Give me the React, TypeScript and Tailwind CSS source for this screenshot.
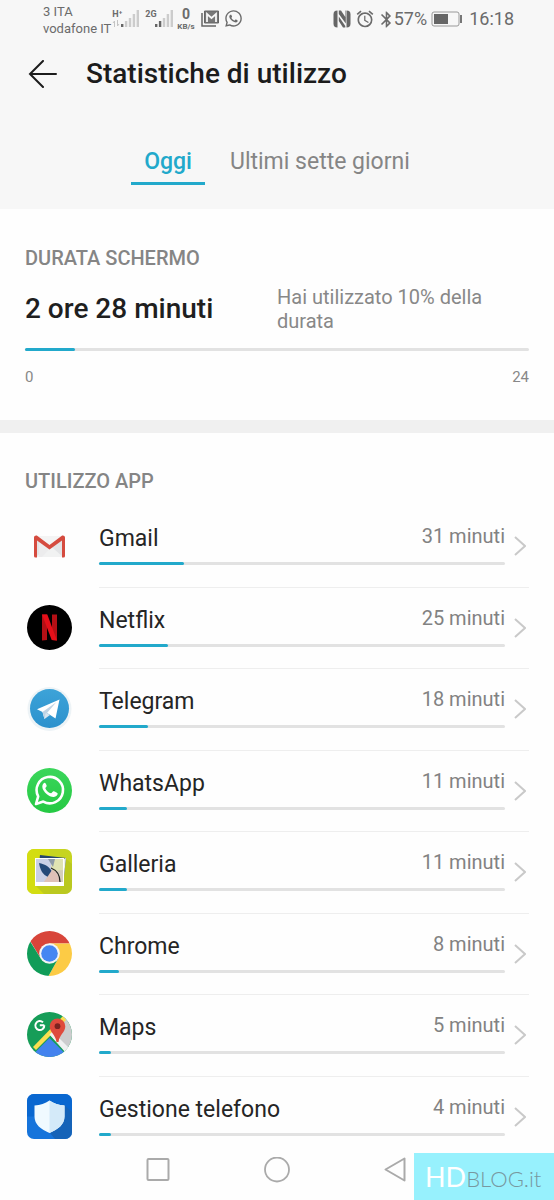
import { FaWhatsapp } from "react-icons/fa";
import { MdAlarm, MdBluetooth } from "react-icons/md";

const GmailIcon = () => (
  <svg viewBox="0 0 45 45" className="w-[45px] h-[45px]">
    <path d="M9 13h27v21H9z" fill="#e3e4e6" />
    <path d="M9 34l13.500-12L36 34z" fill="#f1f2f2" />
    <path d="M9 13h27L22.500 24z" fill="#f4f4f4" />
    <path d="M22.500 26L12 17v17h3l7.500-8z" fill="#ececed" />
    <path
      d="M7 14.500C7 12.700 9.200 12 10.500 13L22.500 22 34.500 13c1.300-1 3.500-.3 3.500 1.500V33q0 1.500-1.500 1.500H35V17.500L22.500 26.500 10 17.500v17H8.500Q7 34.500 7 33z"
      fill="#d54b3f"
    />
  </svg>
);

const NetflixIcon = () => (
  <svg viewBox="0 0 45 45" className="w-[45px] h-[45px]">
    <circle cx="22.500" cy="22.500" r="22.500" fill="#000" />
    <path d="M15 9.500h5V35l-5 .6zM25 9.500h5v26.100l-5-.6z" fill="#b50f15" />
    <path d="M15 9.500h5.300L30 35.600l-5.300-.6z" fill="#e50f19" />
  </svg>
);

const TelegramIcon = () => (
  <svg viewBox="0 0 45 45" className="w-[45px] h-[45px]">
    <defs>
      <linearGradient id="tg" x1="0" y1="0" x2="0" y2="1">
        <stop offset="0" stopColor="#3da3d8" />
        <stop offset="1" stopColor="#2b91cd" />
      </linearGradient>
    </defs>
    <circle cx="22.500" cy="23" r="22" fill="#edf3f6" />
    <circle cx="22.500" cy="22.500" r="19.500" fill="url(#tg)" />
    <path d="M10 23.300L32.500 13.500 28.500 32.500 20.500 27.300 17.500 33 15.500 26z" fill="#fff" />
    <path d="M15.500 26l14-10-9.500 11-2.500 6z" fill="#bfd3e4" />
    <path d="M17.500 33l1-5.500 2 0 2.500 1.500z" fill="#d9e5ef" />
  </svg>
);

const WhatsAppIcon = () => (
  <svg viewBox="0 0 45 45" className="w-[45px] h-[45px]">
    <defs>
      <linearGradient id="wa" x1="0" y1="0" x2="0" y2="1">
        <stop offset="0" stopColor="#3bd65b" />
        <stop offset="1" stopColor="#25c943" />
      </linearGradient>
    </defs>
    <circle cx="22.500" cy="22.500" r="22.500" fill="url(#wa)" />
    <path
      d="M9 36l2.200-7.600A13.200 13.200 0 1 1 16.300 33.600z"
      fill="none"
      stroke="#fff"
      strokeWidth="2.600"
      strokeLinejoin="round"
    />
    <path
      d="M17.800 14.800c-.8 0-2.500 1.400-2.500 3.900 0 2.600 2.100 5.300 4.300 7.200 2.300 2 4.700 3.100 7.200 3 2.300-.1 3.900-1.700 3.900-3.400 0-.6-3.700-2.500-4.400-2.300-.7.200-1.600 2.200-2.300 2.100-2.400-.6-4.800-3-5.600-4.900-.2-.7 1.300-1.500 1.300-2.300 0-.7-1-3.300-1.900-3.300z"
      fill="#fff"
    />
  </svg>
);

const GalleryIcon = () => (
  <svg viewBox="0 0 45 45" className="w-[45px] h-[45px]">
    <rect width="45" height="45" rx="7" fill="#c6d420" />
    <path d="M7 0h15.500v45H7a7 7 0 0 1-7-7V7a7 7 0 0 1 7-7z" fill="#d3dd12" />
    <path d="M37 8l8 7v23a7 7 0 0 1-7 7H17L9 37z" fill="#b2bf22" opacity=".6" />
    <path d="M13 6l26 3-3 27-26-3z" fill="#27466d" />
    <path d="M36 10l3-1-3 27z" fill="#eef0e8" />
    <rect x="8" y="9" width="29" height="28" fill="#fff" />
    <path d="M9 10h27v23H9z" fill="#c9cfe6" />
    <path d="M23 10h13v23H17l8-12z" fill="#d4cdbd" />
    <path d="M25 10h11v11l-10 1-2-5z" fill="#dfe3b2" />
    <path d="M12 14c6 1 11 4 13 9l-4 5C16 26 13 21 12 14z" fill="#244878" />
    <path d="M21 10l5 8 2-8z" fill="#8d9aa8" />
    <path d="M17 33l8-12c5 2 7 6 7 12z" fill="#dfc1b8" />
    <path d="M24 19c5 2 9 7 9 14" fill="none" stroke="#222" strokeWidth="1.200" />
  </svg>
);

const ChromeIcon = () => (
  <svg viewBox="0 0 45 45" className="w-[45px] h-[45px]">
    <defs>
      <clipPath id="chr">
        <circle cx="22.500" cy="22.500" r="22.500" />
      </clipPath>
    </defs>
    <g clipPath="url(#chr)">
      <path d="M0 0h45v12.500H22.500L13.800 27.500 3.500 10.500z" fill="#d8453a" />
      <path d="M45 12.500H22.500L31.200 27.500 21.500 45H45z" fill="#fccb45" />
      <path d="M0 8l3.500 3L13.800 27.500h17.400L21.500 45H0z" fill="#109c58" />
    </g>
    <circle cx="22.500" cy="22.500" r="10.300" fill="#f3f4f4" />
    <circle cx="22.500" cy="22.500" r="8.300" fill="#4586f2" />
  </svg>
);

const MapsIcon = () => (
  <svg viewBox="0 0 45 45" className="w-[45px] h-[45px]">
    <defs>
      <clipPath id="map">
        <circle cx="22.500" cy="22.500" r="22.500" />
      </clipPath>
    </defs>
    <g clipPath="url(#map)">
      <path d="M0 0h45v45H0z" fill="#169d58" />
      <path d="M38 4L22.500 22.500 40 41l5-5V0z" fill="#cccdce" />
      <path d="M36 4l3 4-30 30-3-3z" fill="#fbdf4f" />
      <path d="M22.500 22.500l3-3L43 37l-4 4z" fill="#f0f1f1" />
      <path d="M22.500 26L5 43.500V45h35v-1.500z" fill="#4382ee" />
    </g>
    <path
      d="M17.300 13.300h-4.500M16 10.400a4.500 4.500 0 1 0 1.300 2.900"
      fill="none"
      stroke="#fff"
      strokeWidth="2"
    />
    <path d="M30.500 6.500a7.800 7.800 0 0 1 7.800 7.800c0 6-5.800 8.200-6.800 15.700h-2c-1-7.500-6.800-9.700-6.800-15.700a7.800 7.800 0 0 1 7.800-7.800z" fill="#df4a3d" />
    <circle cx="30.500" cy="14.200" r="2.900" fill="#7c2320" />
  </svg>
);

const PhoneManagerIcon = () => (
  <svg viewBox="0 0 45 45" className="w-[45px] h-[45px]">
    <rect width="45" height="45" rx="7" fill="#1674db" />
    <path d="M7 0h31a7 7 0 0 1 7 7v15.500H0V7a7 7 0 0 1 7-7z" fill="#0967d0" />
    <path d="M36 10l9 8v20a7 7 0 0 1-7 7H28l-5-6z" fill="#1563b8" />
    <path d="M22.500 6.500c4.500 3.200 9 4.500 15 5v11c0 8-6.500 13-15 16.500-8.500-3.500-15-8.500-15-16.500v-11c6-.5 10.500-1.800 15-5z" fill="#f0faff" />
    <path d="M22.500 6.500c4.500 3.200 9 4.500 15 5v11c0 8-6.500 13-15 16.500z" fill="#d4eaf9" />
  </svg>
);

const Signal = (props: { active: number }) => (
  <svg viewBox="0 0 18 18" className="w-[18px] h-[18px] mt-[2px]">
    {[3, 6, 9, 13, 17].map((h, i) => (
      <rect key={h} x={i * 3.9} y={18 - h} width="2.400" height={h} fill={i < props.active ? "#666" : "#cccccc"} />
    ))}
  </svg>
);

const StatusBar = () => (
  <div className="flex justify-between pl-[43px] pr-10 pt-[3px] text-[#6b6b6b]">
    <div className="flex">
      <div className="text-[13px] leading-[17px] whitespace-nowrap">
        <div>3 ITA</div>
        <div>vodafone IT</div>
      </div>
      <div className="flex pl-px pt-1">
        <div className="flex">
          <div className="flex flex-col w-[9px] pt-[2px]">
            <span className="text-[9px] leading-[11px] font-bold">H⁺</span>
            <svg viewBox="0 0 9 7" className="w-[9px] h-[7px]">
              <path d="M2.500 7V1L1 3M5.500 0v6L7 4" fill="none" stroke="#c4c4c4" />
            </svg>
          </div>
          <Signal active={1} />
        </div>
        <div className="flex pl-[6px]">
          <span className="w-[10px] pt-[2px] text-[9px] leading-[11px] font-bold">2G</span>
          <Signal active={2} />
        </div>
        <div className="flex flex-col items-center pl-1 font-bold">
          <span className="text-[14px] leading-[15px]">0</span>
          <span className="text-[8px] leading-[9px]">KB/s</span>
        </div>
      </div>
      <svg viewBox="0 0 18 17" className="w-[18px] h-[17px] ml-[6px] mt-[7px]">
        <path d="M3.500 1h14v12h-14z" fill="#777" stroke="#666" />
        <path d="M6 12V4l4.500 4L15 4v8" fill="none" stroke="#f7f7f7" strokeWidth="1.800" />
        <path d="M1 3v13h14" fill="none" stroke="#666" strokeWidth="1.500" />
      </svg>
      <FaWhatsapp className="w-[19px] h-[19px] ml-[5px] mt-[6px]" />
    </div>
    <div className="flex items-center h-8">
      <svg viewBox="0 0 18 18" className="w-[18px] h-[18px]">
        <path d="M4.500.5C1.500.5.500 2 .5 4.500v9c0 2.500 1 4 4 4z" fill="#666" />
        <path d="M13.500.5c3 0 4 1.500 4 4v9c0 2.500-1 4-4 4z" fill="#666" />
        <path d="M5.800.5h2.200L12.300 7V.5h.5v13L5.800 4z" fill="#666" />
        <path d="M5.800 6.500l6.500 9.500v1.500H10L5.800 11z" fill="#666" />
      </svg>
      <MdAlarm className="w-[20px] h-[20px] ml-[4px]" />
      <MdBluetooth className="w-[19px] h-[19px] ml-[2px] -mr-[2px]" />
      <span className="text-[18px] leading-6">57%</span>
      <svg viewBox="0 0 32 16" className="w-8 h-4 ml-1">
        <rect x="1" y="1" width="27" height="14" rx="2" fill="none" stroke="#999" />
        <rect x="3" y="3" width="14" height="10" fill="#666" />
        <rect x="29" y="4" width="2" height="8" fill="#777" />
      </svg>
      <span className="text-[18px] leading-6 ml-[6px]">16:18</span>
    </div>
  </div>
);

const apps = [
  { name: "Gmail", minutes: 31, percent: 21, icon: <GmailIcon /> },
  { name: "Netflix", minutes: 25, percent: 17, icon: <NetflixIcon /> },
  { name: "Telegram", minutes: 18, percent: 12, icon: <TelegramIcon /> },
  { name: "WhatsApp", minutes: 11, percent: 7, icon: <WhatsAppIcon /> },
  { name: "Galleria", minutes: 11, percent: 7, icon: <GalleryIcon /> },
  { name: "Chrome", minutes: 8, percent: 5, icon: <ChromeIcon /> },
  { name: "Maps", minutes: 5, percent: 3, icon: <MapsIcon /> },
  { name: "Gestione telefono", minutes: 4, percent: 3, icon: <PhoneManagerIcon /> },
];

const Bar = (props: { percent: number }) => (
  <div className="h-[3px] rounded-full bg-[#e2e2e2]">
    <div className="h-full rounded-full bg-[#22a9cb]" style={{ width: `${props.percent}%` }} />
  </div>
);

const AppRow = (props: any) => (
  <li className="group h-[81px] odd:h-[82px] last:h-[62px] overflow-hidden">
    <a href="#" className="flex h-full pl-[27px] pr-[25px]">
      <div className="pt-[17px] shrink-0">{props.icon}</div>
      <div className="flex flex-1 ml-[27px] border-b border-[#eeeeee] group-last:border-0">
        <div className="flex-1 pt-[19px]">
          <div className="flex justify-between h-[27px] mb-[10px]">
            <span className="text-[23px] leading-[27px] text-[#252525]">{props.name}</span>
            <span className="text-[20px] leading-[23px] text-[#828282]">{props.minutes} minuti</span>
          </div>
          <Bar percent={props.percent} />
        </div>
        <svg viewBox="0 0 12 20" className="w-3 h-5 ml-[9px] mr-[3px] mt-[30px]">
          <path d="M1 1l10 9-10 9" fill="none" stroke="#c9c9c9" strokeWidth="2" />
        </svg>
      </div>
    </a>
  </li>
);

const NavBar = () => (
  <nav className="relative flex items-center justify-center gap-[94px] h-[61px]">
    <button aria-label="Recenti">
      <svg viewBox="0 0 24 24" className="w-6 h-6">
        <rect x="1.500" y="1" width="21" height="21" rx="1" fill="none" stroke="#aaa" strokeWidth="2" />
      </svg>
    </button>
    <button aria-label="Home">
      <svg viewBox="0 0 26 26" className="w-[26px] h-[26px]">
        <circle cx="13" cy="12.500" r="12" fill="none" stroke="#aaa" strokeWidth="1.800" />
      </svg>
    </button>
    <button aria-label="Indietro">
      <svg viewBox="0 0 24 26" className="w-6 h-[26px]">
        <path d="M20.500 1.500v22L1.500 12.500z" fill="none" stroke="#aaa" strokeWidth="2" strokeLinejoin="round" />
      </svg>
    </button>
    <div className="absolute right-0 bottom-0 flex items-baseline h-[47px] w-[140px] pl-[11px] whitespace-nowrap bg-[#97f1fd] font-['Lato',sans-serif]">
      <span className="text-[27px] leading-[47px] text-white">HD</span>
      <span className="text-[22px] leading-[47px] font-light text-[#7898a0]">BLOG.it</span>
    </div>
  </nav>
);

const App = () => {
  return (
    <div className="min-h-screen flex flex-col bg-[#fefefe] font-['Roboto',sans-serif]">
      <header className="bg-[#f7f7f7]">
        <StatusBar />
        <div className="flex items-center pl-7 pt-[2px] h-[72px]">
          <button aria-label="Indietro">
            <svg viewBox="0 0 29 28" className="w-[29px] h-7">
              <path d="M28 14H2M15 1L2 14l13 13" fill="none" stroke="#1c1c1c" strokeWidth="2" strokeLinecap="round" />
            </svg>
          </button>
          <h1 className="ml-[29px] text-[28px] leading-8 font-medium text-[#1c1c1c]">Statistiche di utilizzo</h1>
        </div>
        <div role="tablist" className="flex justify-center gap-3 pt-[39px] pb-6 text-[23px] leading-7">
          <button role="tab" aria-selected="true" className="px-[13px] pb-[6px] border-b-3 border-[#22a9cb] font-medium text-[#22a9cb]">
            Oggi
          </button>
          <button role="tab" aria-selected="false" className="px-[13px] pb-[6px] border-b-3 border-transparent text-[#858585]">
            Ultimi sette giorni
          </button>
        </div>
      </header>
      <main className="flex-1">
        <section className="px-[25px] pt-[37px] pb-[33px] border-b-[13px] border-[#f0f0f0]">
          <h2 className="text-[20px] leading-6 font-medium text-[#858585]">DURATA SCHERMO</h2>
          <div className="grid grid-cols-2 items-center pt-[15px] pb-[15px]">
            <p className="text-[28px] leading-8 font-medium text-[#1f1f1f]">2 ore 28 minuti</p>
            <p className="text-[20px] leading-6 text-[#888]">Hai utilizzato 10% della durata</p>
          </div>
          <Bar percent={10} />
          <div className="flex justify-between pt-4 text-[15px] leading-5 text-[#888]">
            <span>0</span>
            <span>24</span>
          </div>
        </section>
        <section className="pt-9">
          <h2 className="px-[25px] pb-[13px] text-[20px] leading-6 font-medium text-[#858585]">UTILIZZO APP</h2>
          <ul>
            {apps.map((app) => (
              <AppRow key={app.name} {...app} />
            ))}
          </ul>
        </section>
      </main>
      <NavBar />
    </div>
  );
};

export default App;
